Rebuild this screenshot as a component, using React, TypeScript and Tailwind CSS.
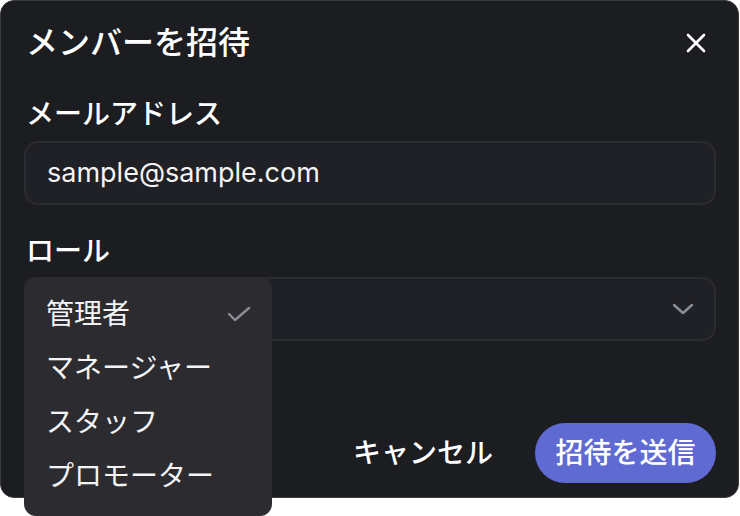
import React from "react";

const font = { fontFamily: 'Inter, "Noto Sans CJK JP", sans-serif' };

export default function App() {
  return (
    <div className="relative w-[740px] h-[516px] bg-white overflow-hidden" style={font}>
      <div className="w-[739px] h-[498px] rounded-[14px] border border-[#3a3b40] bg-[#1c1d21] pl-[23px] pr-[22px] pt-[20px] pb-[14px] flex flex-col text-white">
        <div className="flex items-center justify-between h-[44px] pl-[2px]">
          <h2 className="text-[32px] leading-[44px] font-medium">メンバーを招待</h2>
          <button className="mr-[9px] text-white">
            <svg width="22" height="22" viewBox="0 0 22 22" fill="none" stroke="currentColor" strokeWidth="2.6" strokeLinecap="round">
              <path d="M3 3L19 19M19 3L3 19" />
            </svg>
          </button>
        </div>
        <label className="mt-[31px] pl-[2px] text-[28px] leading-[36px] font-medium">メールアドレス</label>
        <div className="mt-[9px] h-[64px] rounded-[14px] border-2 border-[#2b2c31] bg-[#202126] flex items-center px-[21px]">
          <span className="text-[27px] leading-[36px] text-[#f4f4f5]">sample@sample.com</span>
        </div>
        <label className="mt-[28px] pl-[2px] text-[28px] leading-[36px] font-medium">ロール</label>
        <div className="mt-[8px] h-[64px] rounded-[14px] border-2 border-[#2b2c31] bg-[#202126] flex items-center justify-end pl-[22px] pr-[20px]">
          <svg width="22" height="14" viewBox="0 0 22 14" fill="none" stroke="#8b8e96" strokeWidth="2.4" strokeLinecap="round" strokeLinejoin="round">
            <path d="M2 3L11 11L20 3" />
          </svg>
        </div>
        <div className="mt-auto flex items-center justify-end gap-[22px]">
          <button className="h-[60px] px-[20px] text-[28px] leading-[36px] font-medium text-white">キャンセル</button>
          <button className="h-[60px] w-[181px] rounded-full bg-[#5f6ad2] text-[28px] leading-[36px] font-medium text-white">招待を送信</button>
        </div>
      </div>
      <div className="absolute left-[24px] top-[277px] w-[248px] h-[239px] rounded-[12px] bg-[#2c2c30] pt-[10px] flex flex-col">
        {["管理者", "マネージャー", "スタッフ", "プロモーター"].map((t, i) => (
          <div key={t} className="h-[54px] flex items-center justify-between pl-[22px] pr-[20px] text-[28px] leading-[36px] text-[#f4f4f5]">
            <span>{t}</span>
            {i === 0 && (
              <svg width="26" height="20" viewBox="0 0 26 20" fill="none" stroke="#8b8e96" strokeWidth="2.4" strokeLinecap="round" strokeLinejoin="round">
                <path d="M3 10L9 16L23 4" />
              </svg>
            )}
          </div>
        ))}
      </div>
    </div>
  );
}
